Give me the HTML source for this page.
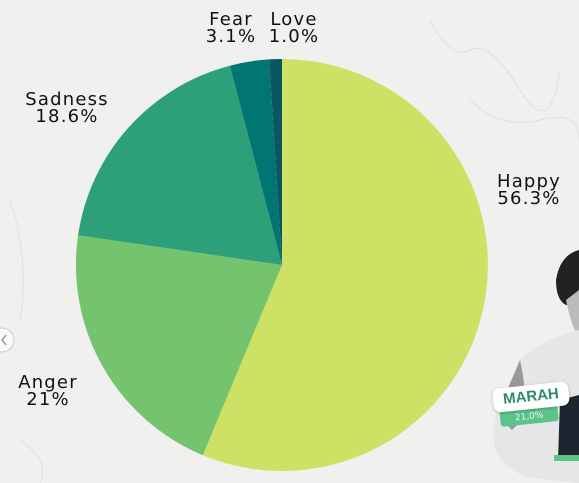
<!DOCTYPE html>
<html><head><style>
html,body{margin:0;padding:0}
body{width:579px;height:483px;overflow:hidden;background:#f0f0ef;position:relative;font-family:"DejaVu Sans","Liberation Sans",sans-serif;color:#111}
.l{position:absolute;font-size:18px;line-height:17px;text-align:center;letter-spacing:1.2px}
</style></head><body>
<svg width="579" height="483" style="position:absolute;left:0;top:0">
<g stroke="#dcdcdc" stroke-width="1" fill="none" opacity="0.8">
<path d="M430 20 Q450 60 470 50 T520 90 T560 70"/>
<path d="M470 100 Q500 130 540 120 T579 140"/>
<path d="M10 200 Q30 260 20 320"/>
<path d="M20 440 Q50 460 40 483"/>
</g>
<g transform="translate(282,265)">
<path d="M0 0 L0 -206 A206 206 0 1 1 -79.2 190.2 Z" fill="#cde264"/>
<path d="M0 0 L-79.2 190.2 A206 206 0 0 1 -203.9 -29.7 Z" fill="#74c46f"/>
<path d="M0 0 L-203.9 -29.7 A206 206 0 0 1 -52.1 -199.3 Z" fill="#2da07a"/>
<path d="M0 0 L-52.1 -199.3 A206 206 0 0 1 -12.9 -205.6 Z" fill="#007571"/>
<path d="M0 0 L-12.9 -205.6 A206 206 0 0 1 0 -206 Z" fill="#0b5660"/>
</g>
<circle cx="2" cy="340" r="12" fill="#fafafa" stroke="#ccc"/>
<path d="M6 335 L2 340 L6 345" stroke="#999" fill="none" stroke-width="1.5"/>
<path d="M579 250 Q560 255 556 280 Q556 300 566 305 L579 305Z" fill="#222"/>
<path d="M566 300 Q572 330 579 335 L579 290Z" fill="#bbb"/>
<path d="M579 330 Q540 340 520 360 L505 395 Q490 420 495 450 Q505 470 530 478 L579 483Z" fill="#e6e6e6"/>
<path d="M520 360 Q528 395 522 420 L512 430 Q500 420 505 395Z" fill="#999"/>
<path d="M560 400 L579 395 L579 460 L558 460Z" fill="#1c2530"/>
<rect x="554" y="455" width="25" height="6" fill="#5cc488"/>
</svg>
<div style="position:absolute;left:500px;top:406px;width:58px;height:14px;background:#5cc488;border-radius:3px;transform:rotate(-6deg);color:#eef;font-size:9px;text-align:center;line-height:14px;padding-top:4px">21,0%</div>
<div style="position:absolute;left:493px;top:385px;width:76px;height:24px;background:#fff;border-radius:7px;transform:rotate(-6deg);box-shadow:0 1px 3px rgba(0,0,0,.25);font-family:'Liberation Sans',sans-serif;font-weight:bold;font-size:15px;line-height:24px;text-align:center;color:#2e8a6a">MARAH</div>
<div class="l" style="left:198px;top:11px;width:66px">Fear<br>3.1%</div>
<div class="l" style="left:260px;top:11px;width:68px">Love<br>1.0%</div>
<div class="l" style="left:10px;top:91px;width:114px">Sadness<br>18.6%</div>
<div class="l" style="left:484px;top:173px;width:90px">Happy<br>56.3%</div>
<div class="l" style="left:6px;top:374px;width:84px">Anger<br>21%</div>
</body></html>
